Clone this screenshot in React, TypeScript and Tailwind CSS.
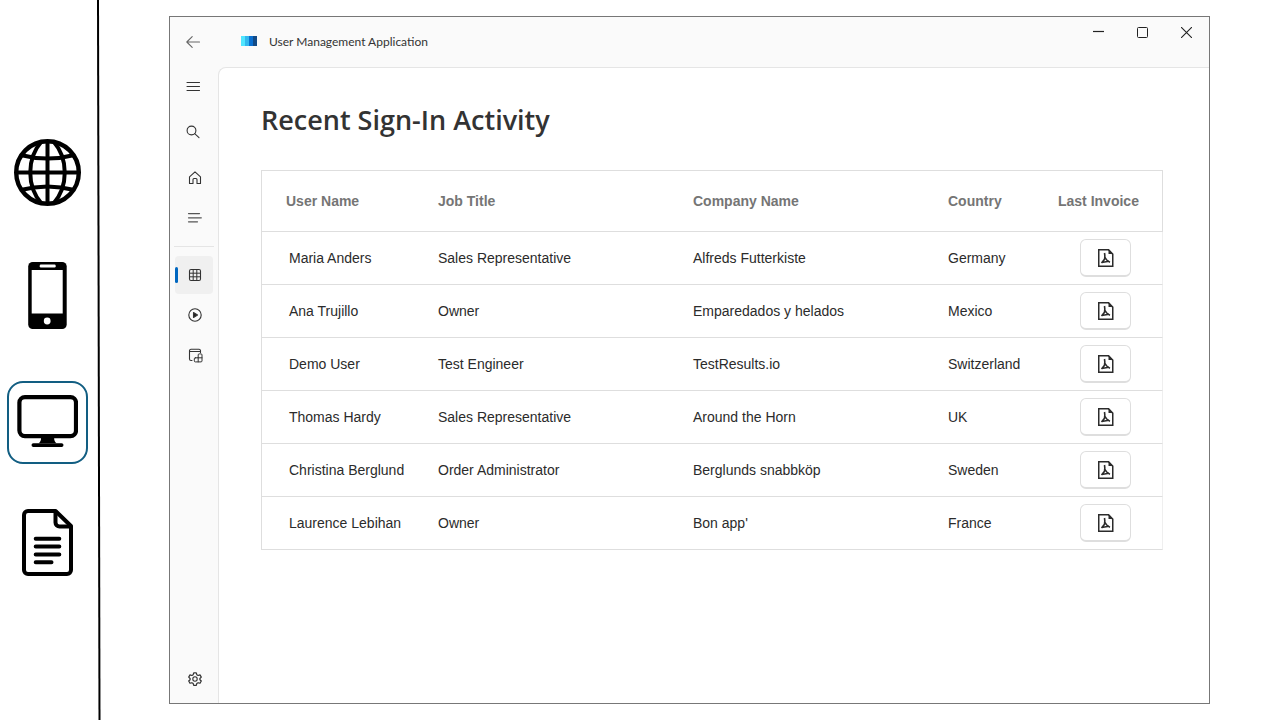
import type { ReactNode } from "react";

type Row = { name: string; job: string; company: string; country: string };

const rows: Row[] = [
  { name: "Maria Anders", job: "Sales Representative", company: "Alfreds Futterkiste", country: "Germany" },
  { name: "Ana Trujillo", job: "Owner", company: "Emparedados y helados", country: "Mexico" },
  { name: "Demo User", job: "Test Engineer", company: "TestResults.io", country: "Switzerland" },
  { name: "Thomas Hardy", job: "Sales Representative", company: "Around the Horn", country: "UK" },
  { name: "Christina Berglund", job: "Order Administrator", company: "Berglunds snabbköp", country: "Sweden" },
  { name: "Laurence Lebihan", job: "Owner", company: "Bon app'", country: "France" },
];

const headers = ["User Name", "Job Title", "Company Name", "Country", "Last Invoice"];

function GlobeIcon() {
  return (
    <svg width="67" height="67" viewBox="0.5 0.5 67 67" fill="none" stroke="#000" strokeWidth="4">
      <circle cx="34" cy="34" r="31.3" strokeWidth="4.4" />
      <path d="M34 2v64M2 34h64" />
      <path d="M28 3C13 20 13 48 28 65M40 3c15 17 15 45 0 62" />
      <path d="M7 16.5c17 4.5 37 4.5 54 0M7 51.5c17-4.5 37-4.5 54 0" />
    </svg>
  );
}

function PhoneIcon() {
  return (
    <svg width="39" height="67" viewBox="0.3 0.5 39 67">
      <rect x="0.5" y="0.5" width="38.5" height="67" rx="4.5" fill="#000" />
      <rect x="12" y="3" width="16" height="3" rx="1.2" fill="#fff" />
      <rect x="4" y="8.5" width="31" height="43.5" fill="#fff" />
      <circle cx="19.5" cy="59.5" r="3.4" fill="#fff" />
    </svg>
  );
}

function MonitorIcon() {
  return (
    <svg width="61" height="55" viewBox="0.4 0.9 61 55">
      <rect x="2.8" y="3" width="56.6" height="39" rx="5.5" fill="none" stroke="#000" strokeWidth="4.2" />
      <path d="M24.500 43.500h13c0 3 .8 4.700 2.400 5.700H22.100c1.600-1 2.400-2.700 2.400-5.700z" fill="#000" />
      <path d="M16.800 51h28.200" stroke="#000" strokeWidth="3.800" strokeLinecap="round" />
    </svg>
  );
}

function DocumentIcon() {
  return (
    <svg width="51" height="67" viewBox="0.5 0.5 51 67" fill="none" stroke="#000" strokeWidth="4" strokeLinecap="round" strokeLinejoin="round">
      <path d="M34 2.500H6.500a4 4 0 0 0-4 4v55a4 4 0 0 0 4 4h39a4 4 0 0 0 4-4V17.500z" />
      <path d="M34 3v11a4 4 0 0 0 4 4h11" />
      <path d="M14.200 30.200H37.800M14.200 38H37.800M14.200 46H37.800M14.200 53.700H30" />
    </svg>
  );
}

function Glyph({ children }: { children: ReactNode }) {
  return (
    <svg width="18" height="18" viewBox="0 0 18 18" fill="none" stroke="#333" strokeWidth="1.1" strokeLinecap="round" strokeLinejoin="round">
      {children}
    </svg>
  );
}

function NavButton({ label, active, children }: { label: string; active?: boolean; children: ReactNode }) {
  return (
    <button
      type="button"
      aria-label={label}
      aria-current={active ? "page" : undefined}
      className={
        active
          ? "relative flex size-[38px] shrink-0 items-center justify-center rounded bg-[#f0f0f0]"
          : "relative flex size-[38px] shrink-0 items-center justify-center rounded hover:bg-[#f0f0f0]"
      }
    >
      {active && <span className="absolute top-[11px] left-0 h-4 w-[3px] rounded-full bg-[#0067c0]" />}
      {children}
    </button>
  );
}

function DeviceRail() {
  return (
    <aside className="flex w-[102px] shrink-0">
      <nav aria-label="Platforms" className="flex flex-1 flex-col items-center pt-[139px]">
        <button type="button" aria-label="Web">
          <GlobeIcon />
        </button>
        <button type="button" aria-label="Mobile" className="mt-14">
          <PhoneIcon />
        </button>
        <button
          type="button"
          aria-label="Desktop"
          aria-pressed="true"
          className="mt-[52px] flex h-[83px] w-[81px] items-center justify-center rounded-2xl border-2 border-[#125e82]"
        >
          <MonitorIcon />
        </button>
        <button type="button" aria-label="Documents" className="mt-[45px]">
          <DocumentIcon />
        </button>
      </nav>
      <svg className="w-[7px] self-stretch" viewBox="0 0 7 720" preserveAspectRatio="none" aria-hidden="true">
        <path d="M3 0L4.500 720" stroke="#000" strokeWidth="2" />
      </svg>
    </aside>
  );
}

function TitleBar() {
  return (
    <header className="flex h-[50px] shrink-0 items-center">
      <button type="button" aria-label="Back" className="ml-1 flex size-[38px] items-center justify-center">
        <Glyph>
          <path d="M15.500 9H3M8.200 3.600L2.800 9l5.400 5.400" stroke="#666" />
        </Glyph>
      </button>
      <svg className="mb-0.5 ml-[29px]" width="16" height="10" viewBox="0 0 16 10" aria-hidden="true">
        <rect x="0" y="0" width="4" height="10" fill="#50e6ff" />
        <rect x="4" y="0" width="4" height="10" fill="#32b8ee" />
        <rect x="8" y="0" width="4" height="10" fill="#0a6fd0" />
        <rect x="12" y="0" width="4" height="10" fill="#124a86" />
      </svg>
      <span className="ml-3 font-['Segoe_UI','Lato',sans-serif] text-xs text-[#333]">User Management Application</span>
      <div className="mr-px ml-auto flex self-start">
        <button type="button" aria-label="Minimize" className="flex h-[31px] w-11 items-center justify-center">
          <svg width="11" height="11" viewBox="0 0 11 11" stroke="#222" fill="none">
            <path d="M0 4.500h11" strokeWidth="1.200" />
          </svg>
        </button>
        <button type="button" aria-label="Maximize" className="flex h-[31px] w-11 items-center justify-center">
          <svg width="11" height="11" viewBox="0 0 11 11" stroke="#222" fill="none">
            <rect x="0.500" y="0.500" width="10" height="10" rx="1" />
          </svg>
        </button>
        <button type="button" aria-label="Close" className="flex h-[31px] w-11 items-center justify-center">
          <svg width="11" height="11" viewBox="0 0 11 11" stroke="#222" fill="none">
            <path d="M0 0l11 11M11 0L0 11" strokeWidth="1.100" />
          </svg>
        </button>
      </div>
    </header>
  );
}

function SideNav() {
  return (
    <nav aria-label="Main" className="flex w-12 shrink-0 flex-col pb-[5px]">
      <div className="flex flex-col gap-2 pl-1">
        <NavButton label="Menu">
          <Glyph>
            <path d="M3 5.500h12.500M3 9.500h12.500M3 13.500h12.500" />
          </Glyph>
        </NavButton>
        <NavButton label="Search">
          <Glyph>
            <circle cx="7.500" cy="7.500" r="4.400" />
            <path d="M10.700 10.700l4.300 4" />
          </Glyph>
        </NavButton>
      </div>
      <div className="mt-2 flex flex-col gap-0.5 pl-[5px]">
        <NavButton label="Home">
          <Glyph>
            <path d="M4.500 7.800L10 2.900l5.500 4.900v6.700H12V10.500a1 1 0 0 0-1-1H9a1 1 0 0 0-1 1v4H4.500z" />
          </Glyph>
        </NavButton>
        <NavButton label="List">
          <Glyph>
            <path d="M3.500 4.600h11M3.500 8.800h12.800M3.500 12.800h9" stroke="#555" strokeWidth="1.200" />
          </Glyph>
        </NavButton>
      </div>
      <hr className="my-[9px] mr-1 ml-1 border-[#e5e5e5]" />
      <div className="flex flex-col gap-0.5 pl-[5px]">
        <NavButton label="Data grid" active>
          <Glyph>
            <rect x="4.500" y="3.500" width="11" height="11" rx="1.500" />
            <path d="M8.200 3.500v11M11.800 3.500v11M4.500 7.200h11M4.500 10.800h11" strokeWidth="1" />
          </Glyph>
        </NavButton>
        <NavButton label="Media">
          <Glyph>
            <circle cx="10" cy="9" r="6.200" />
            <path d="M8.500 6.500l4 2.500-4 2.500z" fill="#222" />
          </Glyph>
        </NavButton>
        <NavButton label="Web views">
          <Glyph>
            <path d="M7 14.500H6A1.500 1.500 0 0 1 4.500 13V4.500A1.500 1.500 0 0 1 6 3.200h8A1.500 1.500 0 0 1 15.500 4.500v2M4.500 5.500h11" />
            <path d="M10.300 11.800h2.900V8.900a1 1 0 0 1 1-1h1.800a1 1 0 0 1 1 1v6a1 1 0 0 1-1 1h-5.700a1 1 0 0 1-1-1v-2.100a1 1 0 0 1 1-1zM13.200 11.800V15.900M13.200 11.800H17" strokeWidth="1" />
          </Glyph>
        </NavButton>
      </div>
      <div className="mt-auto pl-[5px]">
        <NavButton label="Settings">
          <Glyph>
            <circle cx="10" cy="9" r="2.200" />
            <path d="M8.700 2.800h2.600l.5 1.900 1.300.8 1.900-.6 1.300 2.200-1.400 1.400v1.200l1.400 1.300-1.300 2.300-1.900-.6-1.300.8-.5 1.800H8.700l-.5-1.800-1.300-.8-1.900.6-1.300-2.300 1.400-1.300V8.500L3.700 7.100 5 4.900l1.900.6 1.300-.8z" strokeWidth="1.200" />
          </Glyph>
        </NavButton>
      </div>
    </nav>
  );
}

function PdfIcon() {
  return (
    <svg width="16" height="18" viewBox="0 0 16 18" fill="none" stroke="#2b2b2b">
      <path d="M10.500 .75H.75v16.500h14V5.200z" strokeWidth="1.500" />
      <path d="M10.500 0v5H15.500z" fill="#2b2b2b" stroke="none" />
      <path d="M6.500 4c.5 2.500.5 4.300 0 6.300L3.500 14M7 8.500c1 2 2.500 3.800 5 4.700M3.500 13.500l7.500-1.300" strokeWidth="1.600" />
    </svg>
  );
}

function ActivityTable() {
  return (
    <table className="mt-[30px] w-full table-fixed border-separate border-spacing-0 border-t border-l border-[#dedede] text-left font-['Liberation_Sans',Arial,sans-serif] text-sm">
      <colgroup>
        <col className="w-[152px]" />
        <col className="w-[255px]" />
        <col className="w-[255px]" />
        <col className="w-[110px]" />
        <col className="w-[129px]" />
      </colgroup>
      <thead>
        <tr>
          {headers.map((h) => (
            <th
              key={h}
              scope="col"
              className="h-[61px] border-b border-[#dedede] pl-6 font-bold whitespace-nowrap text-[#757575] last:border-r"
            >
              {h}
            </th>
          ))}
        </tr>
      </thead>
      <tbody className="text-[#2b2b2b]">
        {rows.map((r) => (
          <tr key={r.name}>
            <td className="h-[53px] border-b border-[#dedede] pl-[27px] whitespace-nowrap">{r.name}</td>
            <td className="border-b border-[#dedede] pl-6">{r.job}</td>
            <td className="border-b border-[#dedede] pl-6">{r.company}</td>
            <td className="border-b border-[#dedede] pl-6">{r.country}</td>
            <td className="border-r border-b border-r-[#efefef] border-b-[#dedede] pl-[46px]">
              <button
                type="button"
                aria-label={`Open invoice of ${r.name}`}
                className="flex h-[38px] w-[51px] items-center justify-center rounded-md border border-b-2 border-[#dedede] bg-white"
              >
                <PdfIcon />
              </button>
            </td>
          </tr>
        ))}
      </tbody>
    </table>
  );
}

export default function App() {
  return (
    <div className="flex min-h-screen bg-white font-['Segoe_UI','Open_Sans',sans-serif]">
      <DeviceRail />
      <div className="flex flex-1 py-4 pr-[70px] pl-[67px]">
        <div className="flex flex-1 flex-col border border-[#777] bg-[#fafafa]">
          <TitleBar />
          <div className="flex flex-1">
            <SideNav />
            <main className="flex-1 rounded-tl-lg border-t border-l border-[#e5e5e5] bg-white pt-8 pr-[46px] pl-[42px]">
              <h1 className="text-[27px] leading-10 font-semibold text-[#333]">Recent Sign-In Activity</h1>
              <ActivityTable />
            </main>
          </div>
        </div>
      </div>
    </div>
  );
}
